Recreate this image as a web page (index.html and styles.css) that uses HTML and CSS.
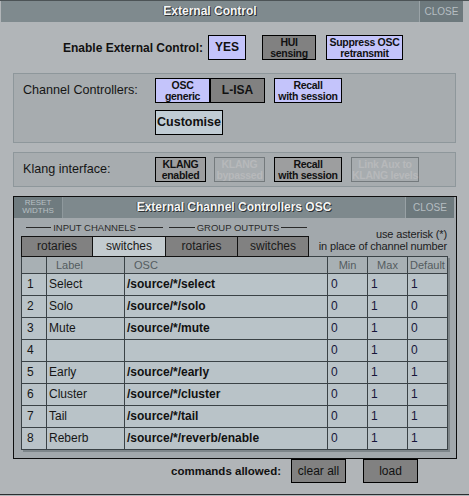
FILE: index.html
```html
<!DOCTYPE html>
<html>
<head>
<meta charset="utf-8">
<link rel="stylesheet" href="styles.css">
</head>
<body>
<div class="app">
  <div class="titlebar">
    <div class="title">External Control</div>
    <div class="close">CLOSE</div>
  </div>

  <div class="enable-row">
    <div class="enable-label">Enable External Control:</div>
    <div class="btn lav yes">YES</div>
    <div class="btn gray hui">HUI<br>sensing</div>
    <div class="btn lav suppress">Suppress OSC<br>retransmit</div>
  </div>

  <div class="panel channel">
    <div class="panel-label">Channel Controllers:</div>
    <div class="panel-buttons">
      <div class="btn-row">
        <div class="btn lav osc">OSC<br>generic</div>
        <div class="btn gray lisa">L-ISA</div>
        <div class="btn lav recall">Recall<br>with session</div>
      </div>
      <div class="btn-row">
        <div class="btn pale customise">Customise</div>
      </div>
    </div>
  </div>

  <div class="panel klang">
    <div class="panel-label">Klang interface:</div>
    <div class="panel-buttons">
      <div class="btn-row">
        <div class="btn mid kl">KLANG<br>enabled</div>
        <div class="btn off kl2">KLANG<br>bypassed</div>
        <div class="btn mid recall2">Recall<br>with session</div>
        <div class="btn off link">Link Aux to<br>KLANG levels</div>
      </div>
    </div>
  </div>

  <div class="subwin">
    <div class="sub-titlebar">
      <div class="reset">RESET<br>WIDTHS</div>
      <div class="sub-title">External Channel Controllers OSC</div>
      <div class="sub-close">CLOSE</div>
    </div>
    <div class="sub-top">
      <div class="tabs-col">
        <div class="groups">
          <div class="group"><span class="line"></span><span class="gtext">INPUT CHANNELS</span><span class="line"></span></div>
          <div class="group g2"><span class="line"></span><span class="gtext">GROUP OUTPUTS</span><span class="line"></span></div>
        </div>
        <div class="tabs">
          <div class="tab t1">rotaries</div>
          <div class="tab t2 sel">switches</div>
          <div class="tab t3">rotaries</div>
          <div class="tab t4">switches</div>
        </div>
      </div>
      <div class="hint">use asterisk (*)<br>in place of channel number</div>
    </div>
    <div class="grid">
      <div class="hc"></div><div class="hc hl">Label</div><div class="hc hl">OSC</div><div class="hc hm">Min</div><div class="hc hm">Max</div><div class="hc hm">Default</div>

      <div class="c n">1</div><div class="c l">Select</div><div class="c o">/source/*/select</div><div class="c v">0</div><div class="c v">1</div><div class="c v">1</div>
      <div class="c n">2</div><div class="c l">Solo</div><div class="c o">/source/*/solo</div><div class="c v">0</div><div class="c v">1</div><div class="c v">0</div>
      <div class="c n">3</div><div class="c l">Mute</div><div class="c o">/source/*/mute</div><div class="c v">0</div><div class="c v">1</div><div class="c v">0</div>
      <div class="c n">4</div><div class="c l"></div><div class="c o"></div><div class="c v">0</div><div class="c v">1</div><div class="c v">0</div>
      <div class="c n">5</div><div class="c l">Early</div><div class="c o">/source/*/early</div><div class="c v">0</div><div class="c v">1</div><div class="c v">1</div>
      <div class="c n">6</div><div class="c l">Cluster</div><div class="c o">/source/*/cluster</div><div class="c v">0</div><div class="c v">1</div><div class="c v">1</div>
      <div class="c n">7</div><div class="c l">Tail</div><div class="c o">/source/*/tail</div><div class="c v">0</div><div class="c v">1</div><div class="c v">1</div>
      <div class="c n">8</div><div class="c l">Reberb</div><div class="c o">/source/*/reverb/enable</div><div class="c v">0</div><div class="c v">1</div><div class="c v">1</div>
    </div>
  </div>

  <div class="footer">
    <div class="footer-label">commands allowed:</div>
    <div class="btn gray plain clear">clear all</div>
    <div class="btn gray plain load">load</div>
  </div>
</div>
</body>
</html>
```

FILE: styles.css
```css
* { box-sizing: border-box; }
html, body { margin: 0; padding: 0; }
body {
  width: 469px;
  height: 496px;
  overflow: hidden;
  background: #b1b5b8;
  font-family: "Liberation Sans", Arial, sans-serif;
  color: #111;
}
.app {
  height: 495px;
  border-top: 1px solid #4c5356;
  border-bottom: 1px solid #2a2e30;
}

/* title bar */
.titlebar {
  display: flex;
  height: 21px;
  margin: 0 6px 0 1px;
}
.title {
  flex: 1;
  background: #7f8a8e;
  color: #f6f6f6;
  font-weight: bold;
  font-size: 12px;
  line-height: 21px;
  text-align: center;
  text-shadow: 1px 1px 0 #2c3133, -1px 0 0 #4a5153;
}
.close {
  width: 44px;
  background: #6d797d;
  border-left: 1px solid #9aa3a7;
  color: #b6bec2;
  font-size: 10px;
  line-height: 21px;
  text-align: center;
}

/* buttons */
.btn {
  border: 1px solid #000;
  display: flex;
  align-items: center;
  justify-content: center;
  text-align: center;
  font-weight: bold;
  font-size: 10.5px;
  letter-spacing: -0.3px;
  line-height: 11px;
  color: #111;
  height: 25px;
  white-space: nowrap;
  padding: 0;
}
.lav { background: #c4c4fb; }
.gray { background: #818181; }
.pale { background: #c0ccd4; }
.mid { background: #9d9e9f; }
.off { background: transparent; border-color: #747a7d; color: #b7b9bb; }

/* enable row */
.enable-row {
  display: flex;
  align-items: center;
  margin-top: 13px;
  height: 25px;
}
.enable-label {
  width: 203px;
  text-align: right;
  font-weight: bold;
  font-size: 12px;
}
.yes { margin-left: 5px; width: 38px; font-size: 12px; letter-spacing: 0; }
.hui { margin-left: 16px; width: 54px; }
.suppress { margin-left: 10px; width: 77px; }

/* panels */
.panel {
  display: flex;
  margin-left: 13px;
  width: 443px;
  border: 1px solid #8e979b;
  background: #a7acaf;
  padding: 4px 0 0 9px;
}
.channel { margin-top: 13px; height: 70px; }
.klang { margin-top: 9px; height: 35px; }
.panel-label {
  width: 132px;
  height: 25px;
  line-height: 25px;
  font-size: 12.6px;
  color: #151515;
  white-space: nowrap;
}
.panel-buttons { display: flex; flex-direction: column; gap: 7px; }
.btn-row { display: flex; }
.osc { width: 55px; }
.lisa { width: 55px; font-size: 12px; letter-spacing: 0; }
.recall { width: 68px; margin-left: 9px; }
.customise { width: 68px; font-size: 12.5px; letter-spacing: 0; }
.kl { width: 51px; }
.kl2 { width: 51px; margin-left: 8px; }
.recall2 { width: 68px; margin-left: 9px; }
.link { width: 68px; margin-left: 9px; }

/* sub window */
.subwin {
  margin-top: 9px;
  margin-left: 13px;
  width: 444px;
  height: 263px;
  border: 1px solid #0e0e0e;
  background: #a2a8ac;
}
.sub-titlebar {
  display: flex;
  height: 21px;
  margin-right: 2px;
}
.reset {
  width: 49px;
  background: #6f7b7f;
  border-right: 1px solid #8f999d;
  color: #b8c0c4;
  font-size: 8px;
  line-height: 8px;
  text-align: center;
  padding-top: 2px;
}
.sub-title {
  flex: 1;
  background: #7e898d;
  color: #f6f6f6;
  font-weight: bold;
  font-size: 12px;
  line-height: 21px;
  text-align: center;
  text-shadow: 1px 1px 0 #2c3133, -1px 0 0 #4a5153;
}
.sub-close {
  width: 49px;
  background: #6d797d;
  border-left: 1px solid #98a1a5;
  color: #b6bec2;
  font-size: 10px;
  line-height: 21px;
  text-align: center;
}
.sub-top {
  display: flex;
  justify-content: space-between;
  align-items: flex-end;
  margin-left: 7px;
}
.groups { display: flex; height: 18px; }
.group {
  width: 144px;
  display: flex;
  align-items: center;
  gap: 2px;
  padding: 0 2px 0 5px;
}
.g2 { padding: 0 2px 0 4px; }
.line { flex: 1; border-top: 1px solid #2a2a2a; }
.gtext { font-size: 9.5px; color: #2a2a2a; white-space: nowrap; }
.tabs { display: flex; height: 21px; }
.tab {
  border: 1px solid #111;
  background: #818181;
  font-size: 12px;
  line-height: 19px;
  text-align: center;
  color: #1a1a1a;
}
.tab.sel { background: #c3cbcf; }
.t1 { width: 72px; }
.t2 { width: 74px; margin-left: -1px; }
.t3 { width: 73px; margin-left: -1px; }
.t4 { width: 72px; margin-left: -1px; }
.hint {
  text-align: right;
  font-size: 11px;
  letter-spacing: -0.15px;
  line-height: 12px;
  color: #1c1c1c;
  padding-right: 9px;
  margin-bottom: 5px;
  white-space: nowrap;
}

/* table */
.grid {
  display: grid;
  grid-template-columns: 25px 78px 203px 40px 40px 40px;
  grid-template-rows: 17px repeat(8, 22px);
  width: 427px;
  margin-left: 7px;
  margin-top: -1px;
  border-left: 1px solid #3a4246;
  border-top: 1px solid #3a4246;
  box-shadow: 2px 2px 0 #7d8589;
}
.hc, .c {
  border-right: 1px solid #3a4246;
  border-bottom: 1px solid #3a4246;
  white-space: nowrap;
  overflow: hidden;
}
.hc {
  background: #a8b0b4;
  color: #545c60;
  font-size: 11px;
  line-height: 16px;
}
.hl { padding-left: 9px; }
.hm { text-align: center; }
.c {
  background: #b9c3c8;
  font-size: 12px;
  line-height: 21px;
  color: #161616;
}
.n { padding-left: 5px; }
.l { padding-left: 2px; }
.o { padding-left: 2px; font-weight: bold; color: #111; }
.v { padding-left: 3px; color: #17163a; }

/* footer */
.footer {
  display: flex;
  align-items: center;
  height: 24px;
}
.footer-label {
  width: 281px;
  text-align: right;
  font-weight: bold;
  font-size: 11.5px;
}
.plain { font-weight: normal; font-size: 12px; letter-spacing: 0; height: 24px; }
.clear { width: 55px; margin-left: 10px; }
.load { width: 55px; margin-left: 17px; }
```
